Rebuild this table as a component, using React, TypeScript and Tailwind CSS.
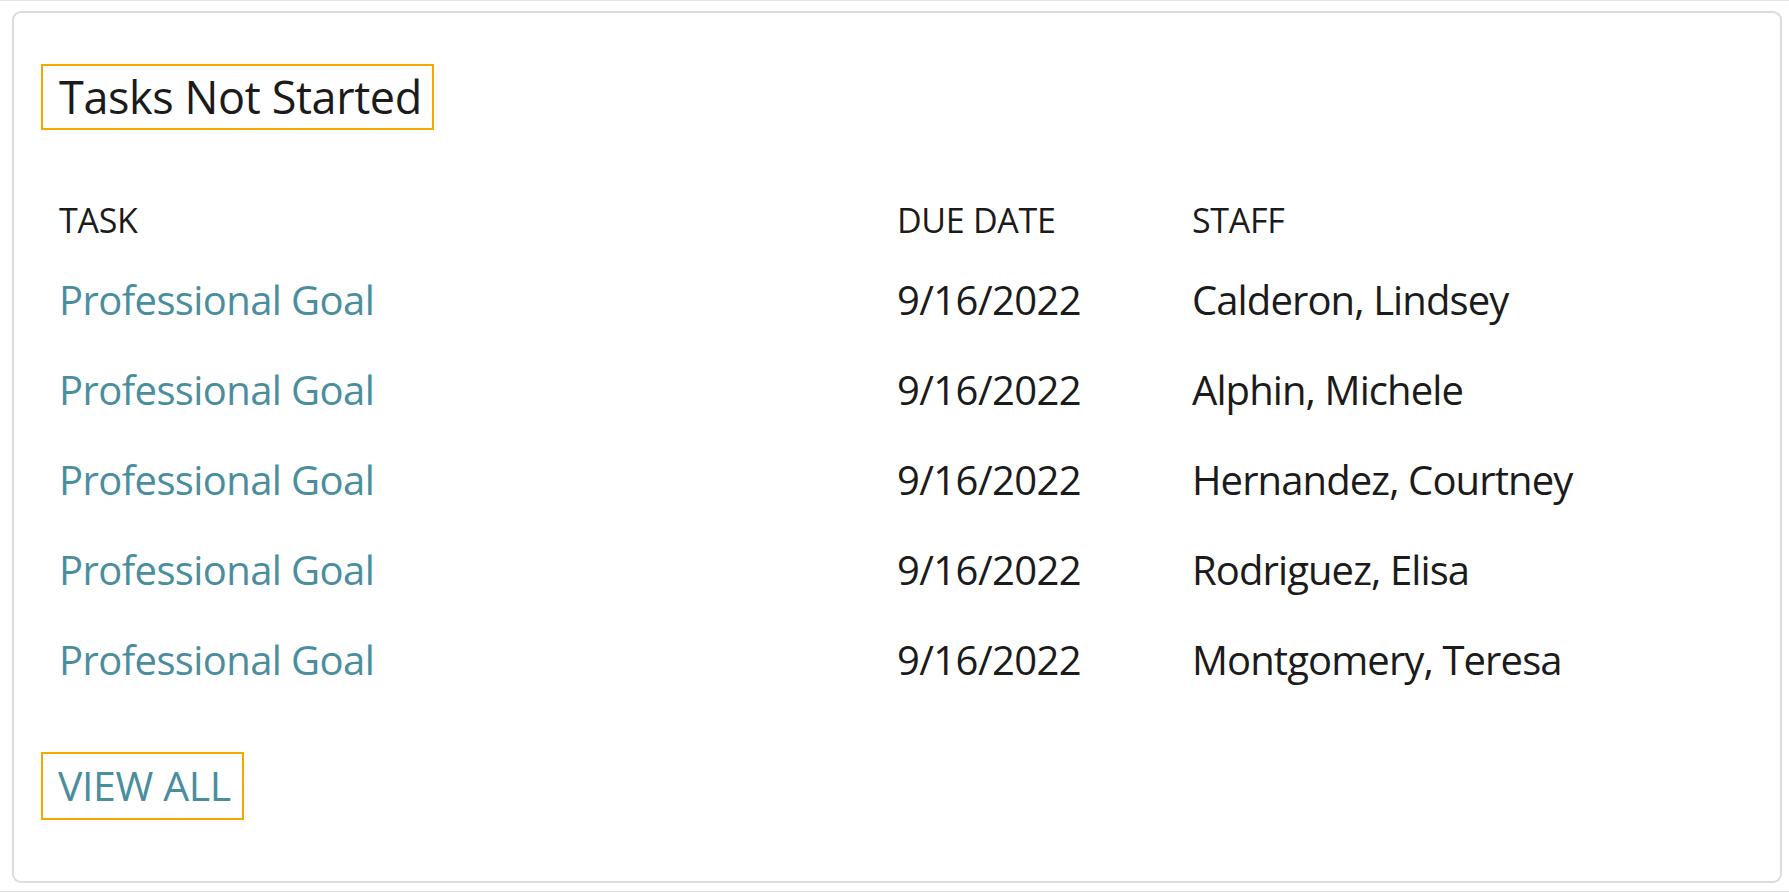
import React from 'react';

type Task = { id: number; title: string; due: string; staff: string };

const TASKS: Task[] = [
  { id: 1, title: 'Professional Goal', due: '9/16/2022', staff: 'Calderon, Lindsey' },
  { id: 2, title: 'Professional Goal', due: '9/16/2022', staff: 'Alphin, Michele' },
  { id: 3, title: 'Professional Goal', due: '9/16/2022', staff: 'Hernandez, Courtney' },
  { id: 4, title: 'Professional Goal', due: '9/16/2022', staff: 'Rodriguez, Elisa' },
  { id: 5, title: 'Professional Goal', due: '9/16/2022', staff: 'Montgomery, Teresa' },
];

export default function App() {
  return (
    <div
      className="h-[892px] bg-white border-t border-b border-[#e4e4e4] pt-[10px] pl-[12px] pr-[7px] text-[#1b1b1b]"
      style={{ fontFamily: '"Open Sans", "Noto Sans", sans-serif' }}
    >
      <section className="h-[872px] rounded-[9px] border-2 border-[#dcdcdc] bg-white pl-[27px] pt-[51px]">
        <h2 className="inline-flex h-[66px] items-center border-2 border-[#f5a900] pl-4 pr-[10px] text-[45px] font-normal tracking-[-0.4px]">
          Tasks Not Started
        </h2>

        <div className="mt-[65px] pl-[18px]">
          <div className="grid h-[40px] grid-cols-[838px_295px_1fr] items-center text-[34px] uppercase tracking-[-0.3px]">
            <span>Task</span>
            <span>Due Date</span>
            <span>Staff</span>
          </div>

          <div className="mt-[20px]">
            {TASKS.map((t) => (
              <div
                key={t.id}
                className="grid h-[90px] grid-cols-[838px_295px_1fr] items-center text-[40px] tracking-[-0.6px]"
              >
                <a href="#" className="text-[#4a8e9e]">
                  {t.title}
                </a>
                <span>{t.due}</span>
                <span className="tracking-[-0.9px]">{t.staff}</span>
              </div>
            ))}
          </div>
        </div>

        <a
          href="#"
          className="mt-[47px] inline-flex h-[68px] items-center border-2 border-[#f5a900] pl-[15px] pr-[11px] text-[41px] uppercase tracking-[-0.4px] text-[#4a8e9e]"
        >
          View All
        </a>
      </section>
    </div>
  );
}
